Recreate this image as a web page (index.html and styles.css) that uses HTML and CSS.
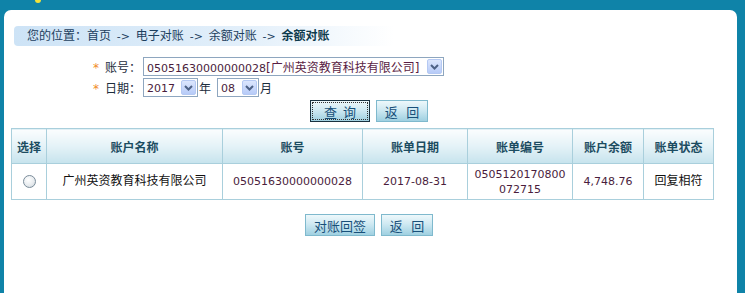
FILE: index.html
```html
<!DOCTYPE html>
<html lang="zh-CN">
<head>
  <meta charset="UTF-8"/>
  <title>余额对账</title>
  <link rel="stylesheet" href="styles.css">
</head>
<body>
  <div class="shell">
    <span class="dot"></span>
    <div class="panel">
      <div class="crumb">
        您的位置：首页 <span class="arr">-&gt;</span> 电子对账 <span class="arr">-&gt;</span> 余额对账 <span class="arr">-&gt;</span> <b>余额对账</b>
      </div>

      <div class="form">
        <div class="form-row">
          <span class="label"><i>*</i>账号：</span>
          <div class="combo combo-acct">
            <span class="combo-text"><span class="num">05051630000000028</span>[广州英资教育科技有限公司]</span>
            <span class="combo-btn"><svg width="9" height="6" viewBox="0 0 9 6"><path d="M1 1 L4.5 4.5 L8 1" fill="none" stroke="#4d6185" stroke-width="2"/></svg></span>
          </div>
        </div>
        <div class="form-row">
          <span class="label"><i>*</i>日期：</span>
          <div class="combo combo-year">
            <span class="combo-text"><span class="num">2017</span></span>
            <span class="combo-btn"><svg width="9" height="6" viewBox="0 0 9 6"><path d="M1 1 L4.5 4.5 L8 1" fill="none" stroke="#4d6185" stroke-width="2"/></svg></span>
          </div>
          <span class="unit">年</span>
          <div class="combo combo-month">
            <span class="combo-text"><span class="num">08</span></span>
            <span class="combo-btn"><svg width="9" height="6" viewBox="0 0 9 6"><path d="M1 1 L4.5 4.5 L8 1" fill="none" stroke="#4d6185" stroke-width="2"/></svg></span>
          </div>
          <span class="unit">月</span>
        </div>
      </div>

      <div class="actions actions-top">
        <button class="btn btn-focus"><span>查&nbsp;&nbsp;询</span></button>
        <button class="btn btn-back">返&nbsp;&nbsp;&nbsp;回</button>
      </div>

      <table class="grid">
        <thead>
          <tr>
            <th class="c-sel">选择</th>
            <th class="c-name">账户名称</th>
            <th class="c-acct">账号</th>
            <th class="c-date">账单日期</th>
            <th class="c-no">账单编号</th>
            <th class="c-bal">账户余额</th>
            <th class="c-st">账单状态</th>
          </tr>
        </thead>
        <tbody>
          <tr>
            <td><span class="radio"></span></td>
            <td>广州英资教育科技有限公司</td>
            <td class="num">05051630000000028</td>
            <td class="num">2017-08-31</td>
            <td class="num two">0505120170800<br>072715</td>
            <td class="num">4,748.76</td>
            <td>回复相符</td>
          </tr>
        </tbody>
      </table>

      <div class="actions actions-bottom">
        <button class="btn btn-sign">对账回签</button>
        <button class="btn btn-back">返&nbsp;&nbsp;&nbsp;回</button>
      </div>
    </div>
  </div>
</body>
</html>
```

FILE: styles.css
```css
* {
  box-sizing: border-box;
  margin: 0;
  padding: 0;
}

body {
  background: #ffffff;
  font-family: "DejaVu Sans", "Noto Sans CJK SC", sans-serif;
  font-size: 12px;
  color: #111;
}

.shell {
  position: relative;
  width: 745px;
  height: 293px;
  background: #0f83a8;
  padding: 10px 8px 0 4px;
}

.dot {
  position: absolute;
  left: 35px;
  top: -3px;
  width: 6px;
  height: 6px;
  border-radius: 50%;
  background: #f2e23a;
}

.panel {
  background: #ffffff;
  height: 283px;
  border-radius: 7px 7px 0 0;
  padding-top: 16px;
}

.crumb {
  margin-left: 10px;
  width: 380px;
  height: 20px;
  line-height: 20px;
  padding-left: 13px;
  border-radius: 4px 0 0 4px;
  background: linear-gradient(90deg, #cde3f6 0%, #e2effa 60%, #ffffff 100%);
  color: #1d3f5e;
  white-space: nowrap;
}

.crumb .arr {
  font-size: 11px;
  margin: 0 2px;
}

.crumb b {
  color: #0e3b4c;
}

.form {
  margin-top: 10px;
  padding-left: 89px;
}

.form-row {
  display: flex;
  align-items: center;
  height: 21px;
}

.label {
  width: 50px;
  color: #1d2d3d;
  white-space: nowrap;
}

.label i {
  font-style: normal;
  color: #f08a28;
  margin-right: 6px;
}

.combo {
  display: flex;
  align-items: center;
  height: 19px;
  border: 1px solid #8ea6bf;
  padding: 1px;
  background: #fff;
}

.combo-text {
  flex: 1;
  padding-left: 2px;
  color: #5a1d44;
  white-space: nowrap;
  overflow: hidden;
}

.num {
  font-size: 11px;
  color: #4a1d3c;
}

.combo-btn {
  width: 15px;
  height: 15px;
  border: 1px solid #b5c9f3;
  border-radius: 2px;
  background: linear-gradient(#dce6fd, #b7cbf8);
  display: flex;
  align-items: center;
  justify-content: center;
}

.combo-acct { width: 301px; }
.combo-year { width: 55px; }
.combo-month { width: 42px; margin-left: 6px; }

.unit {
  margin-left: 1px;
  color: #1d2d3d;
}

.actions {
  display: flex;
  gap: 6px;
}

.actions-top {
  margin-top: 2px;
  padding-left: 306px;
}

.actions-bottom {
  margin-top: 14px;
  padding-left: 301px;
}

.btn {
  height: 22px;
  font-family: "Noto Sans CJK SC", sans-serif;
  font-size: 13px;
  color: #18507a;
  border: 1px solid #7fb9cd;
  background: linear-gradient(#eef8fb 0%, #cfe9f2 45%, #9fd0e1 100%);
  cursor: pointer;
}

.btn-focus {
  width: 60px;
  border: 1px solid #1a3240;
  padding: 1px;
}

.btn-focus span {
  display: block;
  height: 18px;
  line-height: 17px;
  border: 1px dotted #333;
}

.btn-back { width: 52px; }
.btn-sign { width: 70px; }

.grid {
  margin: 6px 0 0 7px;
  width: 702px;
  border-collapse: collapse;
  table-layout: fixed;
}

.grid th,
.grid td {
  border: 1px solid #a9cfdc;
  text-align: center;
}

.grid th {
  height: 35px;
  font-weight: bold;
  color: #1c4c61;
  background: linear-gradient(#fbfdfe 0%, #e4f2f7 50%, #c6e3ed 100%);
}

.grid td {
  height: 36px;
  line-height: 15px;
}

.c-sel { width: 35px; }
.c-name { width: 176px; }
.c-acct { width: 140px; }
.c-date { width: 105px; }
.c-no { width: 105px; }
.c-bal { width: 71px; }
.c-st { width: 70px; }

.radio {
  display: inline-block;
  width: 13px;
  height: 13px;
  border-radius: 50%;
  border: 1px solid #7b8d9b;
  background: radial-gradient(circle at 40% 35%, #ffffff 0%, #e8ecef 55%, #c9d1d8 100%);
  vertical-align: middle;
}
```
